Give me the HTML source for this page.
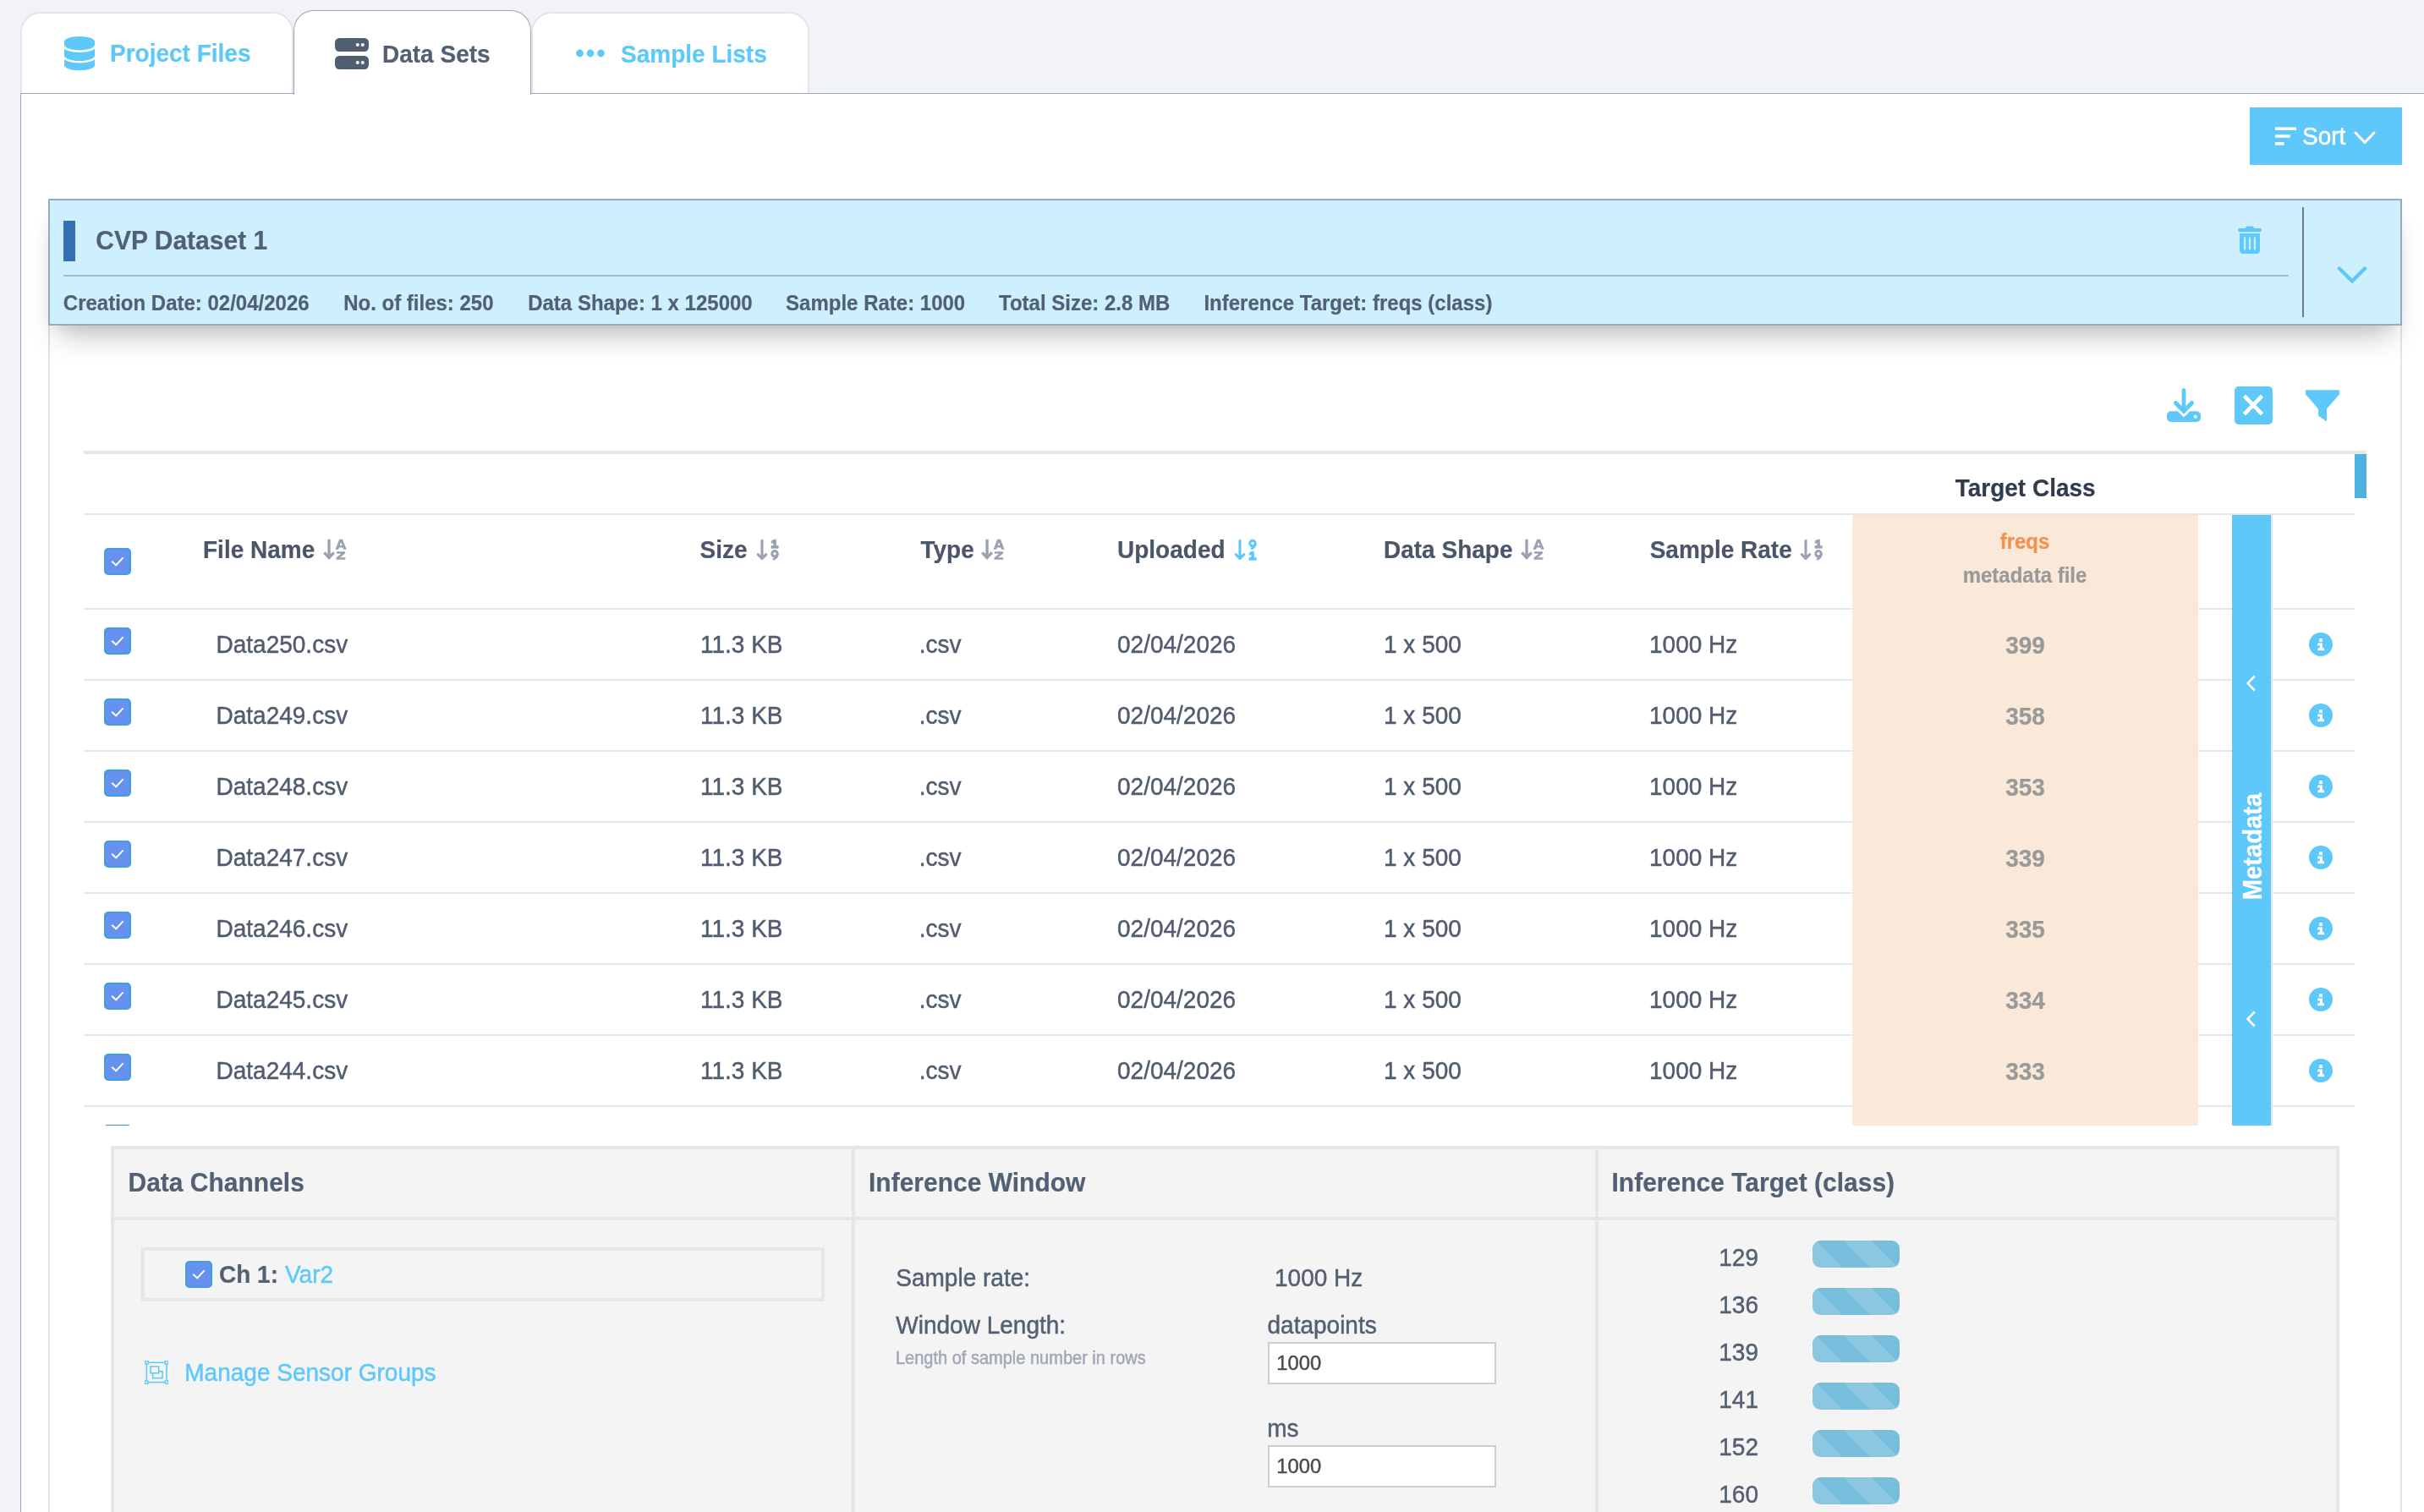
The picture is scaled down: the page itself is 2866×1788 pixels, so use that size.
<!DOCTYPE html>
<html lang="en"><head><meta charset="utf-8"><title>Data Sets</title><style>
html,body{margin:0;padding:0;background:#f1f3f7}
body{width:2866px;height:1788px;overflow:hidden;position:relative;background:#f1f3f7;font-family:"Liberation Sans",sans-serif}
#app{position:absolute;left:0;top:0;width:2866px;height:1788px;overflow:hidden;will-change:transform}
.r{position:absolute;display:block}
.t{position:absolute;line-height:1;white-space:nowrap;transform:scaleY(1.065);transform-origin:0 83%;-webkit-text-stroke:0.45px currentColor}
.b{-webkit-text-stroke:0.2px currentColor}
.bar{width:103px;height:32px;border-radius:9.5px;background-color:#77bddc;
background-image:linear-gradient(45deg,rgba(255,255,255,.15) 25%,transparent 25%,transparent 50%,rgba(255,255,255,.15) 50%,rgba(255,255,255,.15) 75%,transparent 75%,transparent);
background-size:66px 66px;background-position:-29px 0}
</style></head><body><div id="app">
<div class="r" style="left:24px;top:110px;width:2900px;height:1800px;background:#fff;border:1px solid #9ea7b4;box-sizing:border-box"></div>
<div class="r" style="left:24px;top:14px;width:323px;height:96px;background:#fff;border:2px solid #e2e5eb;border-bottom:none;border-radius:24px 24px 0 0;box-sizing:border-box"></div>
<div class="r" style="left:628px;top:14px;width:329px;height:96px;background:#fff;border:2px solid #e2e5eb;border-bottom:none;border-radius:24px 24px 0 0;box-sizing:border-box"></div>
<div class="r" style="left:347px;top:12px;width:281px;height:100px;background:#fff;border:1px solid #9ea7b4;border-bottom:none;border-radius:24px 24px 0 0;box-sizing:border-box"></div>
<svg class="r" style="left:76px;top:42.8px" width="36" height="40.4" viewBox="0 0 448 512" preserveAspectRatio="none"><path fill="#5ec8fa" d="M448 80v48c0 44.2-100.3 80-224 80S0 172.2 0 128V80C0 35.8 100.3 0 224 0S448 35.8 448 80zM393.2 214.7c20.8-7.4 39.9-16.9 54.8-28.6V288c0 44.2-100.3 80-224 80S0 332.2 0 288V186.1c14.9 11.8 34 21.2 54.8 28.6C99.7 230.7 159.5 240 224 240s124.3-9.3 169.2-25.3zM0 346.1c14.9 11.8 34 21.2 54.8 28.6C99.7 390.7 159.5 400 224 400s124.3-9.3 169.2-25.3c20.8-7.4 39.9-16.9 54.8-28.6V432c0 44.2-100.3 80-224 80S0 476.2 0 432V346.1z"/></svg>
<div class="t b" style="left:130.0px;top:50.10px;font-size:28px;font-weight:700;color:#5ec8fa;">Project Files</div>
<svg class="r" style="left:396px;top:44.6px;" width="40" height="37" viewBox="0 0 40 37"><g fill="#525f70"><rect x="0" y="0" width="40" height="16" rx="5.2"/><rect x="0" y="21" width="40" height="16" rx="5.2"/></g>
<g fill="#fff"><circle cx="26.8" cy="8" r="2"/><circle cx="32.8" cy="8" r="2"/><circle cx="26.8" cy="29" r="2"/><circle cx="32.8" cy="29" r="2"/></g></svg>
<div class="t b" style="left:452.0px;top:50.70px;font-size:28px;font-weight:700;color:#526073;">Data Sets</div>
<svg class="r" style="left:680px;top:57px;" width="36" height="12" viewBox="0 0 36 12"><g fill="#5ec8fa"><circle cx="5.5" cy="6" r="4.4"/><circle cx="18" cy="6" r="4.4"/><circle cx="30.5" cy="6" r="4.4"/></g></svg>
<div class="t b" style="left:734.0px;top:50.70px;font-size:28px;font-weight:700;color:#5ec8fa;">Sample Lists</div>
<div class="r" style="left:2660px;top:127px;width:180px;height:68px;background:#5ec8fa;"></div>
<svg class="r" style="left:2690px;top:150px;" width="26" height="22" viewBox="0 0 26 22"><g fill="#fff"><rect x="0" y="0.4" width="25" height="3.6"/><rect x="0" y="9.2" width="17.6" height="3.6"/><rect x="0" y="18" width="10.6" height="3.6"/></g></svg>
<div class="t" style="left:2722.0px;top:148.30px;font-size:28px;color:#fff;">Sort</div>
<svg class="r" style="left:2780px;top:152px;" width="32" height="22" viewBox="0 0 32 22"><path d="M5 5 L16 16.5 L27 5" fill="none" stroke="#fff" stroke-width="3" stroke-linecap="round" stroke-linejoin="round"/></svg>
<div class="r" style="left:57px;top:385px;width:2px;height:1415px;background:#e1e3ea;"></div>
<div class="r" style="left:2838px;top:385px;width:2px;height:1415px;background:#e1e3ea;"></div>
<div class="r" style="left:57px;top:235px;width:2783px;height:150px;background:#ceeffe;border:2px solid #96acbc;box-sizing:border-box;box-shadow:0 24px 32px -12px rgba(0,0,0,.23), 0 8px 18px -6px rgba(0,0,0,.08)"></div>
<div class="r" style="left:75px;top:261px;width:14px;height:48px;background:#3470b2;"></div>
<div class="t b" style="left:113.3px;top:269.71px;font-size:30px;font-weight:700;color:#526073;">CVP Dataset 1</div>
<div class="r" style="left:75px;top:325px;width:2631px;height:2px;background:#a6bccb;"></div>
<div class="t b" style="left:74.8px;top:347.08px;font-size:24px;font-weight:700;color:#526073;">Creation Date: 02/04/2026</div>
<div class="t b" style="left:406.2px;top:347.08px;font-size:24px;font-weight:700;color:#526073;">No. of files: 250</div>
<div class="t b" style="left:624.2px;top:347.08px;font-size:24px;font-weight:700;color:#526073;">Data Shape: 1 x 125000</div>
<div class="t b" style="left:929.1px;top:347.08px;font-size:24px;font-weight:700;color:#526073;">Sample Rate: 1000</div>
<div class="t b" style="left:1181.0px;top:347.08px;font-size:24px;font-weight:700;color:#526073;">Total Size: 2.8 MB</div>
<div class="t b" style="left:1423.4px;top:347.08px;font-size:24px;font-weight:700;color:#526073;">Inference Target: freqs (class)</div>
<svg class="r" style="left:2646px;top:267px;" width="28" height="33" viewBox="0 0 28 33"><g fill="#5ec8fa"><rect x="0" y="3" width="28" height="4.2" rx="2.1"/><path d="M8.6 3 L10.6 0.6 H17.4 L19.4 3 Z"/>
<path d="M2 9 H26 V29 a4 4 0 0 1 -4 4 H6 a4 4 0 0 1 -4 -4 Z"/></g>
<g fill="#ceeffe"><rect x="7" y="13.4" width="2.2" height="15"/><rect x="12.9" y="13.4" width="2.2" height="15"/><rect x="18.8" y="13.4" width="2.2" height="15"/></g></svg>
<div class="r" style="left:2722px;top:245px;width:2px;height:130px;background:#6b7b8c;"></div>
<svg class="r" style="left:2760px;top:311px;" width="42" height="28" viewBox="0 0 42 28"><path d="M6 6.5 L21 21.5 L36 6.5" fill="none" stroke="#5ec8fa" stroke-width="4.4" stroke-linecap="round" stroke-linejoin="round"/></svg>
<svg class="r" style="left:2562px;top:459px;" width="40" height="40" viewBox="0 0 40 40"><g fill="none" stroke="#5ec8fa" stroke-width="4.8" stroke-linecap="round" stroke-linejoin="round"><path d="M20 2.6 V27"/><path d="M10.6 17.6 L20 27.4 L29.4 17.6"/></g>
<path d="M5 27.3 H12.6 L20 34.4 L27.4 27.3 H35 a5 5 0 0 1 5 5 V35 a5 5 0 0 1 -5 5 H5 a5 5 0 0 1 -5 -5 V32.3 a5 5 0 0 1 5 -5 Z" fill="#5ec8fa"/>
<path d="M12.2 24.6 L20 32.2 L27.8 24.6" fill="none" stroke="#fff" stroke-width="2.4"/>
<g fill="none" stroke="#5ec8fa" stroke-width="4.8" stroke-linecap="round" stroke-linejoin="round"><path d="M10.6 17.6 L20 27.4 L29.4 17.6"/></g>
<circle cx="33.7" cy="33.8" r="2" fill="#fff"/></svg>
<div class="r" style="left:2641.5px;top:456.5px;width:45.0px;height:45.0px;background:#5ec8fa;border-radius:5px"></div>
<svg class="r" style="left:2641px;top:456px;" width="46" height="46" viewBox="0 0 46 46"><path d="M12.4 12.2 L33.6 33.8 M33.6 12.2 L12.4 33.8" stroke="#fff" stroke-width="4.6" fill="none"/></svg>
<svg class="r" style="left:2726px;top:461px;" width="40" height="38" viewBox="0 0 40 38"><path d="M0 0.3 H40 V5.2 L25 22.6 V37.4 L15 30.5 V22.6 L0 5.2 Z" fill="#5ec8fa"/></svg>
<div class="r" style="left:99px;top:533px;width:2699px;height:4px;background:#e4e6ec;"></div>
<div class="r" style="left:2784px;top:537px;width:14px;height:52px;background:#4fb1e0;"></div>
<div class="t b" style="left:1794.7px;width:1200px;text-align:center;top:563.60px;font-size:28px;font-weight:700;color:#2f3b4f;">Target Class</div>
<div class="r" style="left:99px;top:607px;width:2685px;height:2px;background:#e4e6ec;"></div>
<div class="r" style="left:99px;top:719px;width:2685px;height:2px;background:#e4e6ec;"></div>
<div class="r" style="left:99px;top:803px;width:2685px;height:2px;background:#e4e6ec;"></div>
<div class="r" style="left:99px;top:887px;width:2685px;height:2px;background:#e4e6ec;"></div>
<div class="r" style="left:99px;top:971px;width:2685px;height:2px;background:#e4e6ec;"></div>
<div class="r" style="left:99px;top:1055px;width:2685px;height:2px;background:#e4e6ec;"></div>
<div class="r" style="left:99px;top:1139px;width:2685px;height:2px;background:#e4e6ec;"></div>
<div class="r" style="left:99px;top:1223px;width:2685px;height:2px;background:#e4e6ec;"></div>
<div class="r" style="left:99px;top:1307px;width:2685px;height:2px;background:#e4e6ec;"></div>
<div class="r" style="left:2190px;top:609px;width:409px;height:722px;background:#fae9d9;"></div>
<div class="r" style="left:2639px;top:609px;width:46px;height:722px;background:#5ec8fa;"></div>
<div class="r" style="left:2685px;top:609px;width:2px;height:722px;background:#e4e8f0;"></div>
<div class="t b" style="left:240.0px;top:637.10px;font-size:28px;font-weight:700;color:#4a566a;">File Name</div>
<svg class="r" style="left:380.7px;top:636px;" width="30" height="28" viewBox="0 0 30 28"><g fill="none" stroke="#9aa1b2" stroke-width="3.3" stroke-linecap="butt" stroke-linejoin="miter"><path d="M8.05 1.8 V23.6"/><path d="M2.3 17.4 L8.05 23.5 L13.8 17.4"/></g><path d="M15.5 13.7 L20.3 1.8 H23.9 L28.7 13.7 H25.1 L24.35 11.6 H19.85 L19.1 13.7 Z M20.75 9 H23.45 L22.1 5.1 Z" fill="#9aa1b2" fill-rule="evenodd"/><path d="M16.9 16.2 H27 V18.5 L21.1 23.2 H27.3 V25.8 H16.5 V23.5 L22.4 18.8 H16.9 Z" fill="#9aa1b2"/></svg>
<div class="t b" style="left:827.5px;top:637.10px;font-size:28px;font-weight:700;color:#4a566a;">Size</div>
<svg class="r" style="left:892.7px;top:636px;" width="30" height="28" viewBox="0 0 30 28"><g fill="none" stroke="#9aa1b2" stroke-width="3.1" stroke-linecap="round" stroke-linejoin="round"><path d="M8 3.4 V24"/><path d="M3.2 19.6 L8 24.4 L12.8 19.6"/></g><path d="M19.200000000000003 3.8000000000000003 L22.0 2.2 H24.5 V9.5 H27.200000000000003 V12.2 H19.0 V9.5 H21.700000000000003 V5.4 L19.200000000000003 6.4 Z" fill="#9aa1b2" stroke="#9aa1b2" stroke-width="0.8" stroke-linejoin="round"/><path d="M27.7 18.8 C27.7 22.8 25 25.4 21.8 26.8 L20.4 24.4 C22.4 23.6 23.6 22.6 24 21.400000000000002 Z" fill="#9aa1b2"/><circle cx="23" cy="18.8" r="3.25" fill="none" stroke="#9aa1b2" stroke-width="3"/></svg>
<div class="t b" style="left:1088.5px;top:637.10px;font-size:28px;font-weight:700;color:#4a566a;">Type</div>
<svg class="r" style="left:1159px;top:636px;" width="30" height="28" viewBox="0 0 30 28"><g fill="none" stroke="#9aa1b2" stroke-width="3.3" stroke-linecap="butt" stroke-linejoin="miter"><path d="M8.05 1.8 V23.6"/><path d="M2.3 17.4 L8.05 23.5 L13.8 17.4"/></g><path d="M15.5 13.7 L20.3 1.8 H23.9 L28.7 13.7 H25.1 L24.35 11.6 H19.85 L19.1 13.7 Z M20.75 9 H23.45 L22.1 5.1 Z" fill="#9aa1b2" fill-rule="evenodd"/><path d="M16.9 16.2 H27 V18.5 L21.1 23.2 H27.3 V25.8 H16.5 V23.5 L22.4 18.8 H16.9 Z" fill="#9aa1b2"/></svg>
<div class="t b" style="left:1321.0px;top:637.10px;font-size:28px;font-weight:700;color:#4a566a;">Uploaded</div>
<svg class="r" style="left:1457.6px;top:636px;" width="30" height="28" viewBox="0 0 30 28"><g fill="none" stroke="#5ec8fa" stroke-width="3.1" stroke-linecap="round" stroke-linejoin="round"><path d="M8 3.4 V24"/><path d="M3.2 19.6 L8 24.4 L12.8 19.6"/></g><path d="M27.7 6.6 C27.7 10.6 25 13.2 21.8 14.6 L20.4 12.2 C22.4 11.399999999999999 23.6 10.399999999999999 24 9.2 Z" fill="#5ec8fa"/><circle cx="23" cy="6.6" r="3.25" fill="none" stroke="#5ec8fa" stroke-width="3"/><path d="M19.200000000000003 17.8 L22.0 16.2 H24.5 V23.5 H27.200000000000003 V26.2 H19.0 V23.5 H21.700000000000003 V19.4 L19.200000000000003 20.4 Z" fill="#5ec8fa" stroke="#5ec8fa" stroke-width="0.8" stroke-linejoin="round"/></svg>
<div class="t b" style="left:1636.0px;top:637.10px;font-size:28px;font-weight:700;color:#4a566a;">Data Shape</div>
<svg class="r" style="left:1797px;top:636px;" width="30" height="28" viewBox="0 0 30 28"><g fill="none" stroke="#9aa1b2" stroke-width="3.3" stroke-linecap="butt" stroke-linejoin="miter"><path d="M8.05 1.8 V23.6"/><path d="M2.3 17.4 L8.05 23.5 L13.8 17.4"/></g><path d="M15.5 13.7 L20.3 1.8 H23.9 L28.7 13.7 H25.1 L24.35 11.6 H19.85 L19.1 13.7 Z M20.75 9 H23.45 L22.1 5.1 Z" fill="#9aa1b2" fill-rule="evenodd"/><path d="M16.9 16.2 H27 V18.5 L21.1 23.2 H27.3 V25.8 H16.5 V23.5 L22.4 18.8 H16.9 Z" fill="#9aa1b2"/></svg>
<div class="t b" style="left:1950.7px;top:637.10px;font-size:28px;font-weight:700;color:#4a566a;">Sample Rate</div>
<svg class="r" style="left:2127px;top:636px;" width="30" height="28" viewBox="0 0 30 28"><g fill="none" stroke="#9aa1b2" stroke-width="3.1" stroke-linecap="round" stroke-linejoin="round"><path d="M8 3.4 V24"/><path d="M3.2 19.6 L8 24.4 L12.8 19.6"/></g><path d="M19.200000000000003 3.8000000000000003 L22.0 2.2 H24.5 V9.5 H27.200000000000003 V12.2 H19.0 V9.5 H21.700000000000003 V5.4 L19.200000000000003 6.4 Z" fill="#9aa1b2" stroke="#9aa1b2" stroke-width="0.8" stroke-linejoin="round"/><path d="M27.7 18.8 C27.7 22.8 25 25.4 21.8 26.8 L20.4 24.4 C22.4 23.6 23.6 22.6 24 21.400000000000002 Z" fill="#9aa1b2"/><circle cx="23" cy="18.8" r="3.25" fill="none" stroke="#9aa1b2" stroke-width="3"/></svg>
<div class="t b" style="left:1794.0px;width:1200px;text-align:center;top:629.28px;font-size:24px;font-weight:700;color:#f0934e;">freqs</div>
<div class="t b" style="left:1794.0px;width:1200px;text-align:center;top:669.48px;font-size:24px;font-weight:700;color:#999;">metadata file</div>
<div class="r" style="left:123px;top:648px;width:32px;height:32px;box-sizing:border-box;border:2px solid #3f9fe0;border-radius:5px;background:#6691ee"></div>
<svg class="r" style="left:123px;top:648px;" width="32" height="32" viewBox="0 0 32 32"><path d="M9.2 15.8 L14.2 20.4 L22.6 11.4" fill="none" stroke="#fff" stroke-width="2" stroke-linejoin="miter"/></svg>
<div class="r" style="left:123px;top:742px;width:32px;height:32px;box-sizing:border-box;border:2px solid #3f9fe0;border-radius:5px;background:#6691ee"></div>
<svg class="r" style="left:123px;top:742px;" width="32" height="32" viewBox="0 0 32 32"><path d="M9.2 15.8 L14.2 20.4 L22.6 11.4" fill="none" stroke="#fff" stroke-width="2" stroke-linejoin="miter"/></svg>
<div class="t" style="left:255.5px;top:749.40px;font-size:28px;color:#505d70;">Data250.csv</div>
<div class="t" style="left:828.0px;top:749.40px;font-size:28px;color:#505d70;">11.3 KB</div>
<div class="t" style="left:1086.7px;top:749.40px;font-size:28px;color:#505d70;">.csv</div>
<div class="t" style="left:1321.0px;top:749.40px;font-size:28px;color:#505d70;">02/04/2026</div>
<div class="t" style="left:1636.0px;top:749.40px;font-size:28px;color:#505d70;">1 x 500</div>
<div class="t" style="left:1950.0px;top:749.40px;font-size:28px;color:#505d70;">1000 Hz</div>
<div class="t b" style="left:1794.5px;width:1200px;text-align:center;top:749.80px;font-size:28px;font-weight:700;color:#999;">399</div>
<svg class="r" style="left:2730px;top:748px;" width="28" height="28" viewBox="0 0 28 28"><circle cx="14" cy="14" r="14" fill="#5ec8fa"/><path d="M12 7.2 H16 V11 H12 Z M10.3 12.4 H16 V18.2 H18 V21.2 H10.3 V18.2 H13 V15.4 H10.3 Z" fill="#fff"/></svg>
<div class="r" style="left:123px;top:826px;width:32px;height:32px;box-sizing:border-box;border:2px solid #3f9fe0;border-radius:5px;background:#6691ee"></div>
<svg class="r" style="left:123px;top:826px;" width="32" height="32" viewBox="0 0 32 32"><path d="M9.2 15.8 L14.2 20.4 L22.6 11.4" fill="none" stroke="#fff" stroke-width="2" stroke-linejoin="miter"/></svg>
<div class="t" style="left:255.5px;top:833.40px;font-size:28px;color:#505d70;">Data249.csv</div>
<div class="t" style="left:828.0px;top:833.40px;font-size:28px;color:#505d70;">11.3 KB</div>
<div class="t" style="left:1086.7px;top:833.40px;font-size:28px;color:#505d70;">.csv</div>
<div class="t" style="left:1321.0px;top:833.40px;font-size:28px;color:#505d70;">02/04/2026</div>
<div class="t" style="left:1636.0px;top:833.40px;font-size:28px;color:#505d70;">1 x 500</div>
<div class="t" style="left:1950.0px;top:833.40px;font-size:28px;color:#505d70;">1000 Hz</div>
<div class="t b" style="left:1794.5px;width:1200px;text-align:center;top:833.80px;font-size:28px;font-weight:700;color:#999;">358</div>
<svg class="r" style="left:2730px;top:832px;" width="28" height="28" viewBox="0 0 28 28"><circle cx="14" cy="14" r="14" fill="#5ec8fa"/><path d="M12 7.2 H16 V11 H12 Z M10.3 12.4 H16 V18.2 H18 V21.2 H10.3 V18.2 H13 V15.4 H10.3 Z" fill="#fff"/></svg>
<div class="r" style="left:123px;top:910px;width:32px;height:32px;box-sizing:border-box;border:2px solid #3f9fe0;border-radius:5px;background:#6691ee"></div>
<svg class="r" style="left:123px;top:910px;" width="32" height="32" viewBox="0 0 32 32"><path d="M9.2 15.8 L14.2 20.4 L22.6 11.4" fill="none" stroke="#fff" stroke-width="2" stroke-linejoin="miter"/></svg>
<div class="t" style="left:255.5px;top:917.40px;font-size:28px;color:#505d70;">Data248.csv</div>
<div class="t" style="left:828.0px;top:917.40px;font-size:28px;color:#505d70;">11.3 KB</div>
<div class="t" style="left:1086.7px;top:917.40px;font-size:28px;color:#505d70;">.csv</div>
<div class="t" style="left:1321.0px;top:917.40px;font-size:28px;color:#505d70;">02/04/2026</div>
<div class="t" style="left:1636.0px;top:917.40px;font-size:28px;color:#505d70;">1 x 500</div>
<div class="t" style="left:1950.0px;top:917.40px;font-size:28px;color:#505d70;">1000 Hz</div>
<div class="t b" style="left:1794.5px;width:1200px;text-align:center;top:917.80px;font-size:28px;font-weight:700;color:#999;">353</div>
<svg class="r" style="left:2730px;top:916px;" width="28" height="28" viewBox="0 0 28 28"><circle cx="14" cy="14" r="14" fill="#5ec8fa"/><path d="M12 7.2 H16 V11 H12 Z M10.3 12.4 H16 V18.2 H18 V21.2 H10.3 V18.2 H13 V15.4 H10.3 Z" fill="#fff"/></svg>
<div class="r" style="left:123px;top:994px;width:32px;height:32px;box-sizing:border-box;border:2px solid #3f9fe0;border-radius:5px;background:#6691ee"></div>
<svg class="r" style="left:123px;top:994px;" width="32" height="32" viewBox="0 0 32 32"><path d="M9.2 15.8 L14.2 20.4 L22.6 11.4" fill="none" stroke="#fff" stroke-width="2" stroke-linejoin="miter"/></svg>
<div class="t" style="left:255.5px;top:1001.40px;font-size:28px;color:#505d70;">Data247.csv</div>
<div class="t" style="left:828.0px;top:1001.40px;font-size:28px;color:#505d70;">11.3 KB</div>
<div class="t" style="left:1086.7px;top:1001.40px;font-size:28px;color:#505d70;">.csv</div>
<div class="t" style="left:1321.0px;top:1001.40px;font-size:28px;color:#505d70;">02/04/2026</div>
<div class="t" style="left:1636.0px;top:1001.40px;font-size:28px;color:#505d70;">1 x 500</div>
<div class="t" style="left:1950.0px;top:1001.40px;font-size:28px;color:#505d70;">1000 Hz</div>
<div class="t b" style="left:1794.5px;width:1200px;text-align:center;top:1001.80px;font-size:28px;font-weight:700;color:#999;">339</div>
<svg class="r" style="left:2730px;top:1000px;" width="28" height="28" viewBox="0 0 28 28"><circle cx="14" cy="14" r="14" fill="#5ec8fa"/><path d="M12 7.2 H16 V11 H12 Z M10.3 12.4 H16 V18.2 H18 V21.2 H10.3 V18.2 H13 V15.4 H10.3 Z" fill="#fff"/></svg>
<div class="r" style="left:123px;top:1078px;width:32px;height:32px;box-sizing:border-box;border:2px solid #3f9fe0;border-radius:5px;background:#6691ee"></div>
<svg class="r" style="left:123px;top:1078px;" width="32" height="32" viewBox="0 0 32 32"><path d="M9.2 15.8 L14.2 20.4 L22.6 11.4" fill="none" stroke="#fff" stroke-width="2" stroke-linejoin="miter"/></svg>
<div class="t" style="left:255.5px;top:1085.40px;font-size:28px;color:#505d70;">Data246.csv</div>
<div class="t" style="left:828.0px;top:1085.40px;font-size:28px;color:#505d70;">11.3 KB</div>
<div class="t" style="left:1086.7px;top:1085.40px;font-size:28px;color:#505d70;">.csv</div>
<div class="t" style="left:1321.0px;top:1085.40px;font-size:28px;color:#505d70;">02/04/2026</div>
<div class="t" style="left:1636.0px;top:1085.40px;font-size:28px;color:#505d70;">1 x 500</div>
<div class="t" style="left:1950.0px;top:1085.40px;font-size:28px;color:#505d70;">1000 Hz</div>
<div class="t b" style="left:1794.5px;width:1200px;text-align:center;top:1085.80px;font-size:28px;font-weight:700;color:#999;">335</div>
<svg class="r" style="left:2730px;top:1084px;" width="28" height="28" viewBox="0 0 28 28"><circle cx="14" cy="14" r="14" fill="#5ec8fa"/><path d="M12 7.2 H16 V11 H12 Z M10.3 12.4 H16 V18.2 H18 V21.2 H10.3 V18.2 H13 V15.4 H10.3 Z" fill="#fff"/></svg>
<div class="r" style="left:123px;top:1162px;width:32px;height:32px;box-sizing:border-box;border:2px solid #3f9fe0;border-radius:5px;background:#6691ee"></div>
<svg class="r" style="left:123px;top:1162px;" width="32" height="32" viewBox="0 0 32 32"><path d="M9.2 15.8 L14.2 20.4 L22.6 11.4" fill="none" stroke="#fff" stroke-width="2" stroke-linejoin="miter"/></svg>
<div class="t" style="left:255.5px;top:1169.40px;font-size:28px;color:#505d70;">Data245.csv</div>
<div class="t" style="left:828.0px;top:1169.40px;font-size:28px;color:#505d70;">11.3 KB</div>
<div class="t" style="left:1086.7px;top:1169.40px;font-size:28px;color:#505d70;">.csv</div>
<div class="t" style="left:1321.0px;top:1169.40px;font-size:28px;color:#505d70;">02/04/2026</div>
<div class="t" style="left:1636.0px;top:1169.40px;font-size:28px;color:#505d70;">1 x 500</div>
<div class="t" style="left:1950.0px;top:1169.40px;font-size:28px;color:#505d70;">1000 Hz</div>
<div class="t b" style="left:1794.5px;width:1200px;text-align:center;top:1169.80px;font-size:28px;font-weight:700;color:#999;">334</div>
<svg class="r" style="left:2730px;top:1168px;" width="28" height="28" viewBox="0 0 28 28"><circle cx="14" cy="14" r="14" fill="#5ec8fa"/><path d="M12 7.2 H16 V11 H12 Z M10.3 12.4 H16 V18.2 H18 V21.2 H10.3 V18.2 H13 V15.4 H10.3 Z" fill="#fff"/></svg>
<div class="r" style="left:123px;top:1246px;width:32px;height:32px;box-sizing:border-box;border:2px solid #3f9fe0;border-radius:5px;background:#6691ee"></div>
<svg class="r" style="left:123px;top:1246px;" width="32" height="32" viewBox="0 0 32 32"><path d="M9.2 15.8 L14.2 20.4 L22.6 11.4" fill="none" stroke="#fff" stroke-width="2" stroke-linejoin="miter"/></svg>
<div class="t" style="left:255.5px;top:1253.40px;font-size:28px;color:#505d70;">Data244.csv</div>
<div class="t" style="left:828.0px;top:1253.40px;font-size:28px;color:#505d70;">11.3 KB</div>
<div class="t" style="left:1086.7px;top:1253.40px;font-size:28px;color:#505d70;">.csv</div>
<div class="t" style="left:1321.0px;top:1253.40px;font-size:28px;color:#505d70;">02/04/2026</div>
<div class="t" style="left:1636.0px;top:1253.40px;font-size:28px;color:#505d70;">1 x 500</div>
<div class="t" style="left:1950.0px;top:1253.40px;font-size:28px;color:#505d70;">1000 Hz</div>
<div class="t b" style="left:1794.5px;width:1200px;text-align:center;top:1253.80px;font-size:28px;font-weight:700;color:#999;">333</div>
<svg class="r" style="left:2730px;top:1252px;" width="28" height="28" viewBox="0 0 28 28"><circle cx="14" cy="14" r="14" fill="#5ec8fa"/><path d="M12 7.2 H16 V11 H12 Z M10.3 12.4 H16 V18.2 H18 V21.2 H10.3 V18.2 H13 V15.4 H10.3 Z" fill="#fff"/></svg>
<div class="r" style="left:125px;top:1330px;width:28px;height:1px;background:#3f9fe0;"></div>
<div class="t b" style="left:2663.9px;top:1001.2px;font-size:29.2px;font-weight:700;color:#fff;transform:translate(-50%,-50%) rotate(-90deg) scaleY(1.06);transform-origin:center">Metadata</div>
<svg class="r" style="left:2650px;top:794px;" width="24" height="28" viewBox="0 0 24 28"><path d="M15.8 5.4 L7.6 14 L15.8 22.6" fill="none" stroke="#fff" stroke-width="2.6" stroke-linecap="butt" stroke-linejoin="miter"/></svg>
<svg class="r" style="left:2650px;top:1190.5px;" width="24" height="28" viewBox="0 0 24 28"><path d="M15.8 5.4 L7.6 14 L15.8 22.6" fill="none" stroke="#fff" stroke-width="2.6" stroke-linecap="butt" stroke-linejoin="miter"/></svg>
<div class="r" style="left:131px;top:1355px;width:2635px;height:445px;background:#e4e6eb;"></div>
<div class="r" style="left:135px;top:1359px;width:872px;height:80px;background:#f4f4f4;"></div>
<div class="r" style="left:1011px;top:1359px;width:875px;height:80px;background:#f4f4f4;"></div>
<div class="r" style="left:1890px;top:1359px;width:872px;height:80px;background:#f4f4f4;"></div>
<div class="r" style="left:135px;top:1443px;width:872px;height:357px;background:#f4f4f4;"></div>
<div class="r" style="left:1011px;top:1443px;width:875px;height:357px;background:#f4f4f4;"></div>
<div class="r" style="left:1890px;top:1443px;width:872px;height:357px;background:#f4f4f4;"></div>
<div class="t b" style="left:151.5px;top:1384.40px;font-size:30px;font-weight:700;color:#526073;">Data Channels</div>
<div class="t b" style="left:1027.0px;top:1384.40px;font-size:30px;font-weight:700;color:#526073;">Inference Window</div>
<div class="t b" style="left:1905.5px;top:1384.40px;font-size:30px;font-weight:700;color:#526073;">Inference Target (class)</div>
<div class="r" style="left:167px;top:1475px;width:808px;height:64px;box-sizing:border-box;border:4px solid #e4e6eb"></div>
<div class="r" style="left:219px;top:1491px;width:32px;height:32px;box-sizing:border-box;border:2px solid #3f9fe0;border-radius:5px;background:#6691ee"></div>
<svg class="r" style="left:219px;top:1491px;" width="32" height="32" viewBox="0 0 32 32"><path d="M9.2 15.8 L14.2 20.4 L22.6 11.4" fill="none" stroke="#fff" stroke-width="2" stroke-linejoin="miter"/></svg>
<div class="t b" style="left:259.0px;top:1494.10px;font-size:28px;font-weight:700;color:#526073;">Ch 1:</div>
<div class="t" style="left:337.0px;top:1494.10px;font-size:28px;color:#5ec8fa;">Var2</div>
<svg class="r" style="left:170.5px;top:1609.1px" width="28.3" height="27.9" viewBox="0 0 28 28" preserveAspectRatio="none"><g fill="none" stroke="#5ec8fa" stroke-width="1.5">
<rect x="2.3" y="2.3" width="23.4" height="23.4"/>
<rect x="9.6" y="12.85" width="11.35" height="7.9"/>
<rect x="6.9" y="6.9" width="9.6" height="7.9" fill="#f4f4f4"/>
<g stroke-width="1.3"><rect x="0.65" y="0.65" width="3.3" height="3.3" fill="#f4f4f4"/><rect x="24.05" y="0.65" width="3.3" height="3.3" fill="#f4f4f4"/>
<rect x="0.65" y="24.05" width="3.3" height="3.3" fill="#f4f4f4"/><rect x="24.05" y="24.05" width="3.3" height="3.3" fill="#f4f4f4"/></g></g></svg>
<div class="t" style="left:218.3px;top:1610.10px;font-size:28px;color:#5ec8fa;">Manage Sensor Groups</div>
<div class="t" style="left:1059.3px;top:1498.10px;font-size:28px;color:#526073;">Sample rate:</div>
<div class="t" style="left:1507.0px;top:1498.10px;font-size:28px;color:#526073;">1000 Hz</div>
<div class="t" style="left:1059.3px;top:1553.60px;font-size:28px;color:#526073;">Window Length:</div>
<div class="t" style="left:1498.5px;top:1553.60px;font-size:28px;color:#526073;">datapoints</div>
<div class="t" style="left:1059.0px;top:1596.47px;font-size:20px;color:#a0a7b6;">Length of sample number in rows</div>
<div class="r" style="left:1499px;top:1587px;width:270px;height:50px;box-sizing:border-box;border:2px solid #cdcdcd;background:#fff"></div>
<div class="t" style="left:1509.3px;top:1600.25px;font-size:23.8px;color:#484c50;transform:scaleY(1.02)">1000</div>
<div class="r" style="left:1499px;top:1709px;width:270px;height:50px;box-sizing:border-box;border:2px solid #cdcdcd;background:#fff"></div>
<div class="t" style="left:1509.3px;top:1722.25px;font-size:23.8px;color:#484c50;transform:scaleY(1.02)">1000</div>
<div class="t" style="left:1498.2px;top:1675.80px;font-size:28px;color:#526073;">ms</div>
<div class="t" style="left:2032.3px;top:1474.20px;font-size:28px;color:#526073;">129</div>
<div class="r bar" style="left:2143px;top:1467px"></div>
<div class="t" style="left:2032.3px;top:1530.20px;font-size:28px;color:#526073;">136</div>
<div class="r bar" style="left:2143px;top:1523px"></div>
<div class="t" style="left:2032.3px;top:1586.20px;font-size:28px;color:#526073;">139</div>
<div class="r bar" style="left:2143px;top:1579px"></div>
<div class="t" style="left:2032.3px;top:1642.20px;font-size:28px;color:#526073;">141</div>
<div class="r bar" style="left:2143px;top:1635px"></div>
<div class="t" style="left:2032.3px;top:1698.20px;font-size:28px;color:#526073;">152</div>
<div class="r bar" style="left:2143px;top:1691px"></div>
<div class="t" style="left:2032.3px;top:1754.20px;font-size:28px;color:#526073;">160</div>
<div class="r bar" style="left:2143px;top:1747px"></div>
</div><script>(function(){var w=window.innerWidth||2866;if(Math.abs(w-2866)>2){var a=document.getElementById("app");a.style.transformOrigin="0 0";a.style.transform="scale("+(w/2866)+")";document.body.style.width=w+"px";document.body.style.height=(1788*w/2866)+"px";}})();</script></body></html>
